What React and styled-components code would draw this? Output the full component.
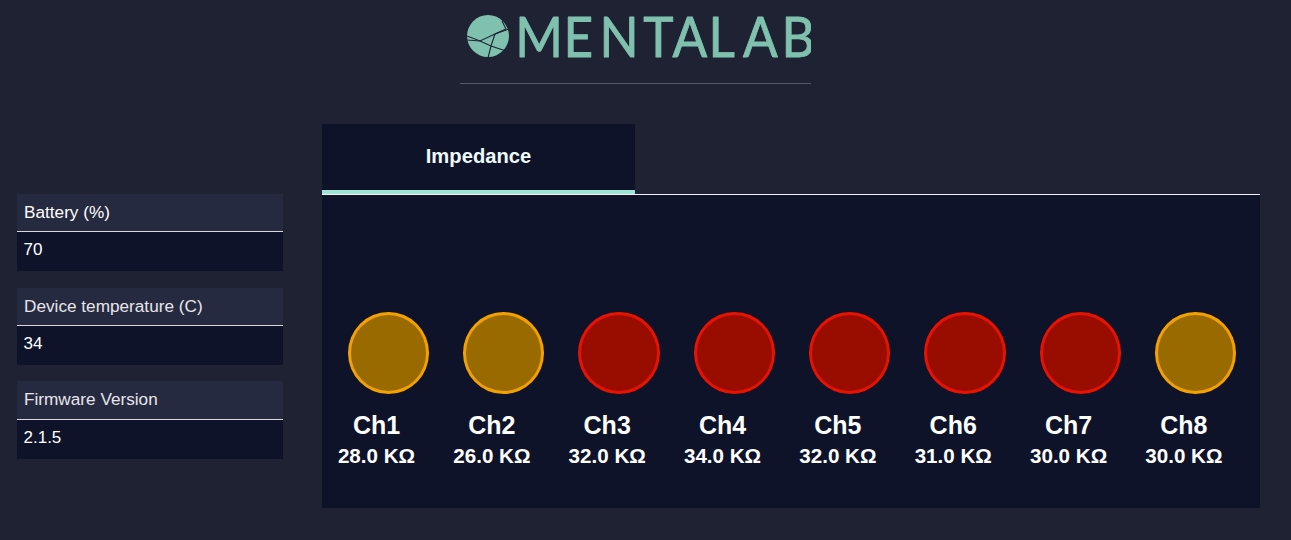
import React from 'react'
import styled, { createGlobalStyle } from 'styled-components'

const GlobalStyle = createGlobalStyle`
    html, body {
        margin: 0;
        padding: 0;
        background-color: #1e2233;
        font-family: 'Liberation Sans', Arial, sans-serif;
    }
`

const Page = styled.div`
    width: 1291px;
    height: 540px;
    overflow: hidden;
    color: #fff;
`

const Header = styled.header`
    width: 351px;
    height: 84px;
    margin-left: 460px;
    padding: 8px 0 0 6px;
    box-sizing: border-box;
    border-bottom: 1px solid #54586a;
`

const LogoSvg = styled.svg`
    display: block;
`

const LogoText = styled.text`
    font-family: 'Lato', sans-serif;
    font-weight: 400;
    font-size: 57px;
    fill: #7fc1ae;
    stroke: #7fc1ae;
    stroke-width: 0.9px;
    stroke-linejoin: round;
`

const Body = styled.div`
    display: flex;
    align-items: flex-start;
    padding: 40px 31px 0 17px;
`

const Sidebar = styled.aside`
    width: 266px;
    margin-top: 70px;
    margin-right: 39px;
    display: flex;
    flex-direction: column;
    gap: 16.33px;
`

const InfoBox = styled.div`
    background-color: #0e132a;
`

const InfoTitle = styled.div`
    height: 37.33px;
    line-height: 37.33px;
    padding-left: 7px;
    font-size: 17.2px;
    color: ${(props) => (props.$bright ? '#ffffff' : '#e6e6ea')};
    background-color: #262a40;
    border-bottom: 1px solid #d8d8dc;
`

const InfoValue = styled.div`
    height: 39px;
    line-height: 35px;
    padding-left: 6.5px;
    font-size: 17px;
`

const Main = styled.main`
    flex: 1;
`

const TabBar = styled.div`
    display: flex;
    border-bottom: 1px solid #f2f2f2;
`

const Tab = styled.div`
    width: 313px;
    height: 66px;
    line-height: 64px;
    text-align: center;
    font-size: 20.2px;
    font-weight: 700;
    background-color: #0e132a;
    color: #eefaf8;
    border-bottom: 4px solid #a0e3d6;
`

const Panel = styled.div`
    height: 313px;
    background-color: #0e132a;
    display: grid;
    grid-template-columns: repeat(8, 115.35px);
    padding-top: 117px;
    box-sizing: border-box;
`

const Channel = styled.div`
    display: flex;
    flex-direction: column;
    align-items: flex-start;
`

const Dot = styled.div`
    width: 81.3px;
    height: 82px;
    margin-left: 25.7px;
    box-sizing: border-box;
    border-radius: 50%;
    border: 3px solid ${(props) => (props.$level === 'warn' ? '#f2a100' : '#e81200')};
    background-color: ${(props) => (props.$level === 'warn' ? '#996a00' : '#990d00')};
`

const Labels = styled.div`
    width: 109px;
    margin-top: 17px;
    text-align: center;
    font-weight: 700;
`

const ChannelName = styled.div`
    font-size: 25px;
    line-height: 28px;
`

const ChannelValue = styled.div`
    font-size: 20.6px;
    line-height: 24px;
    margin-top: 5px;
`

const info = [
    { title: 'Battery (%)', value: '70' },
    { title: 'Device temperature (C)', value: '34' },
    { title: 'Firmware Version', value: '2.1.5' },
]

const channels = [
    { name: 'Ch1', value: '28.0 KΩ', level: 'warn' },
    { name: 'Ch2', value: '26.0 KΩ', level: 'warn' },
    { name: 'Ch3', value: '32.0 KΩ', level: 'bad' },
    { name: 'Ch4', value: '34.0 KΩ', level: 'bad' },
    { name: 'Ch5', value: '32.0 KΩ', level: 'bad' },
    { name: 'Ch6', value: '31.0 KΩ', level: 'bad' },
    { name: 'Ch7', value: '30.0 KΩ', level: 'bad' },
    { name: 'Ch8', value: '30.0 KΩ', level: 'warn' },
]

const Logo = () => (
    <LogoSvg width='345' height='60' viewBox='0 0 345 60'>
        <circle cx='22' cy='28' r='21' fill='#7fc1ae' />
        <g transform='translate(0 7)' fill='none' stroke='#1e2233' strokeWidth='1.1'>
            <path d='M1 21 L14 26 L29 19 L43 14' />
            <path d='M1 25 L14 26 L25 31 L40 36' />
            <path d='M36 6 L40 14 L29 19 L25 31 L22 43' />
        </g>
        <g transform='scale(0.9 1)'>
            <LogoText x='54.8 108.3 148.3 197 229.5 269.4 307.8 350.6' y='49'>
                MENTALAB
            </LogoText>
        </g>
    </LogoSvg>
)

const App = () => {
    return (
        <Page>
            <GlobalStyle />
            <Header>
                <Logo />
            </Header>
            <Body>
                <Sidebar>
                    {info.map((item, i) => (
                        <InfoBox key={item.title}>
                            <InfoTitle $bright={i === 0}>{item.title}</InfoTitle>
                            <InfoValue>{item.value}</InfoValue>
                        </InfoBox>
                    ))}
                </Sidebar>
                <Main>
                    <TabBar>
                        <Tab>Impedance</Tab>
                    </TabBar>
                    <Panel>
                        {channels.map((ch) => (
                            <Channel key={ch.name}>
                                <Dot $level={ch.level} />
                                <Labels>
                                    <ChannelName>{ch.name}</ChannelName>
                                    <ChannelValue>{ch.value}</ChannelValue>
                                </Labels>
                            </Channel>
                        ))}
                    </Panel>
                </Main>
            </Body>
        </Page>
    )
}

export default App
